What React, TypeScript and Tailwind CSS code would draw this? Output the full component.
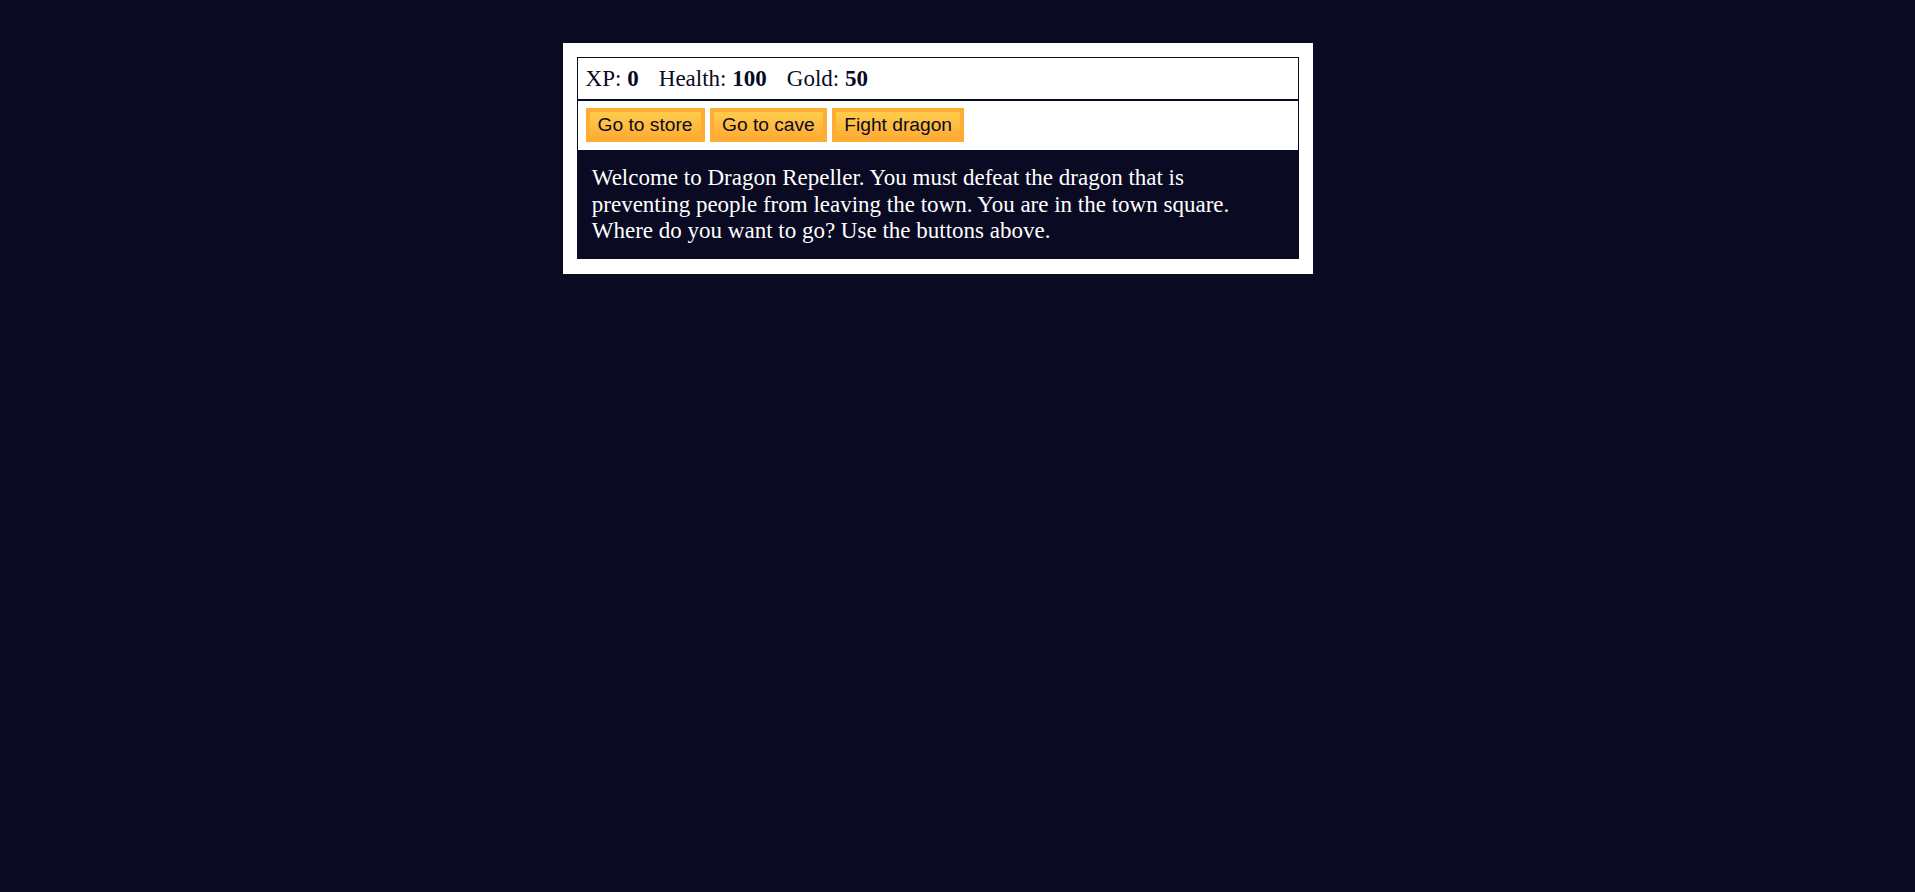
import React, { useState } from 'react';

const App = () => {
  const [xp] = useState<number>(0);
  const [health] = useState<number>(100);
  const [gold] = useState<number>(50);

  const buttons = ['Go to store', 'Go to cave', 'Fight dragon'];

  return (
    <div className="min-h-screen w-full bg-[#0a0a23] pt-[43px] pr-[39px] font-['Liberation_Serif',serif]">
      <div className="mx-auto w-[750px] bg-white p-[14.4px] text-white">
        {/* stats */}
        <div className="border border-[#0a0a23] p-[7.2px] text-[23px] leading-[26.5px] text-[#0a0a23]">
          <span className="pr-[14.4px]">
            XP: <strong>{xp}</strong>
          </span>{' '}
          <span className="pr-[14.4px]">
            Health: <strong>{health}</strong>
          </span>{' '}
          <span className="pr-[14.4px]">
            Gold: <strong>{gold}</strong>
          </span>
        </div>

        {/* controls */}
        <div className="flex gap-[5.5px] border border-[#0a0a23] p-[7.2px] pb-[8.5px]">
          {buttons.map((label) => (
            <button
              key={label}
              className="cursor-pointer border-[4.3px] border-[#feac32] bg-[#feac32] bg-gradient-to-b from-[#fecc4c] to-[#ffac33] px-[8px] py-[1.5px] font-['Liberation_Sans',Arial,sans-serif] text-[19.2px] leading-[22.1px] text-[#0a0a23]"
            >
              {label}
            </button>
          ))}
        </div>

        {/* text */}
        <div className="bg-[#0a0a23] p-[14.4px] text-[23px] leading-[26.5px] text-white">
          Welcome to Dragon Repeller. You must defeat the dragon that is preventing people from
          leaving the town. You are in the town square. Where do you want to go? Use the buttons
          above.
        </div>
      </div>
    </div>
  );
};

export default App;
